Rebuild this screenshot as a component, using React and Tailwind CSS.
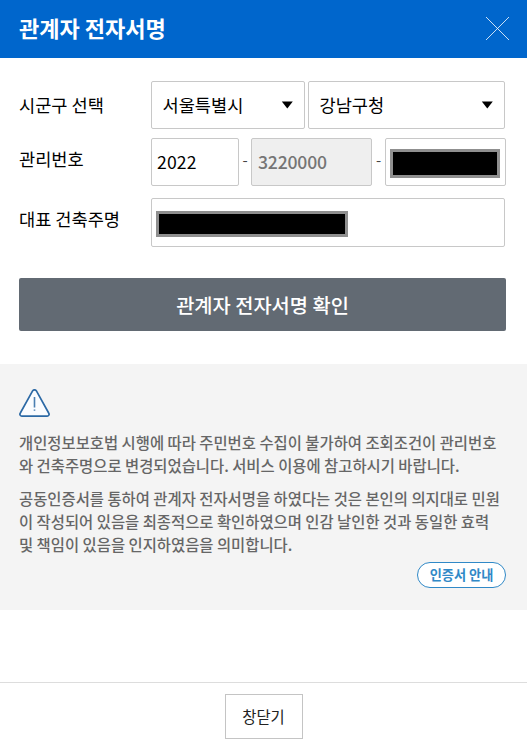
import React from "react";

const boxClass = "rounded-[2px] border border-[#c8c8c8] bg-white";

function CloseIcon() {
  return (
    <svg width="24" height="24" viewBox="0 0 24 24" fill="none" stroke="#ffffff" strokeWidth="0.8">
      <path d="M0 0L23 23M23 0L0 23" />
    </svg>
  );
}

function WarningIcon() {
  return (
    <svg width="31" height="28" viewBox="0 0 31 28" fill="none" stroke="#2c69a5">
      <path
        d="M13.6 1.9a2.2 2.2 0 0 1 3.8 0L29.8 24.2a1.9 1.9 0 0 1-1.7 2.9H2.9a1.9 1.9 0 0 1-1.7-2.9z"
        fill="#fafcff"
        strokeWidth="1.7"
      />
      <path d="M15.5 8v10.6M15.5 20.4v1.4" strokeWidth="1.6" strokeOpacity="0.85" />
    </svg>
  );
}

function SelectBox({ value, className }) {
  return (
    <div className={`flex h-12 items-center justify-between pl-[10.5px] pr-[11px] ${boxClass} ${className}`}>
      <span>{value}</span>
      <svg width="12" height="8" viewBox="0 0 12 8" fill="#000000">
        <path d="M0.8 0.6h11L6.3 7.4z" />
      </svg>
    </div>
  );
}

// 가려진 입력값
function Masked({ className }) {
  return <div className={`border-[3px] border-[#8f8f8f] bg-black ${className}`} />;
}

function Row({ label, className, labelClass, children }) {
  return (
    <div className={`flex ${className}`}>
      <div className={`flex w-[132px] shrink-0 items-center ${labelClass}`}>{label}</div>
      {children}
    </div>
  );
}

export default function App() {
  return (
    <div className="flex h-[745px] w-[527px] flex-col overflow-hidden bg-white font-['Noto_Sans_CJK_KR',sans-serif] text-black">
      <header className="flex h-[58px] shrink-0 items-center justify-between bg-[#0066cc] pl-[19px] pr-[17px]">
        <h1 className="pb-1 text-[22px] font-bold leading-[54px] text-white">관계자 전자서명</h1>
        <CloseIcon />
      </header>

      <form className="flex flex-col pl-[19px] pt-[23px] text-[17.6px] leading-6">
        <Row label="시군구 선택" className="h-12">
          <SelectBox value="서울특별시" className="w-[154px]" />
          <SelectBox value="강남구청" className="ml-[3px] w-[197px]" />
        </Row>
        <Row label="관리번호" className="mt-[9px] h-12" labelClass="pb-[6px]">
          <div className={`flex w-[88px] items-center pl-[5px] tracking-[0.15px] ${boxClass}`}>2022</div>
          <span className="w-3 pt-[10px] text-center text-[15px] text-[#444444]">-</span>
          <div className="flex w-[121px] items-center rounded-[2px] border border-[#c8c8c8] bg-[#efefef] pl-[6px] font-medium tracking-[-0.2px] text-[#757575]">
            3220000
          </div>
          <span className="w-[13px] pt-[10px] text-center text-[15px] text-[#444444]">-</span>
          <div className={`flex w-[121px] items-center pl-1 pt-[2px] ${boxClass}`}>
            <Masked className="h-[29px] w-[110px]" />
          </div>
        </Row>
        <Row label="대표 건축주명" className="mt-3 h-[49px]" labelClass="pb-2">
          <div className={`flex w-[354px] items-center pl-1 pt-[2px] ${boxClass}`}>
            <Masked className="h-[26px] w-[192px]" />
          </div>
        </Row>
        <button
          type="button"
          className="mt-[31px] h-[53px] w-[487px] rounded-[2px] bg-[#626a73] text-[19.8px] font-medium text-white"
        >
          관계자 전자서명 확인
        </button>
      </form>

      <section className="mt-[33px] flex h-[246px] shrink-0 flex-col bg-[#f4f4f4] pl-[19px] pr-[21px] pt-[25px] text-[15.4px] font-medium leading-[23px] text-[#666666]">
        <WarningIcon />
        <p className="mt-[14px] whitespace-nowrap">
          개인정보보호법 시행에 따라 주민번호 수집이 불가하여 조회조건이 관리번호
          <br />
          와 건축주명으로 변경되었습니다. 서비스 이용에 참고하시기 바랍니다.
        </p>
        <p className="mt-[10px] whitespace-nowrap">
          공동인증서를 통하여 관계자 전자서명을 하였다는 것은 본인의 의지대로 민원
          <br />
          이 작성되어 있음을 최종적으로 확인하였으며 인감 날인한 것과 동일한 효력
          <br />
          및 책임이 있음을 인지하였음을 의미합니다.
        </p>
        <button
          type="button"
          className="mt-[6px] h-[26px] w-[89px] self-end rounded-full border border-[#3089c7] bg-white text-[13.2px] font-bold leading-6 text-[#3089c7]"
        >
          인증서 안내
        </button>
      </section>

      <footer className="mt-[72px] flex justify-center border-t border-[#dddddd] pt-[11px]">
        <button type="button" className="h-[45px] w-[78px] border border-[#c4c4c4] bg-white text-[15.4px] text-[#222222]">
          창닫기
        </button>
      </footer>
    </div>
  );
}
